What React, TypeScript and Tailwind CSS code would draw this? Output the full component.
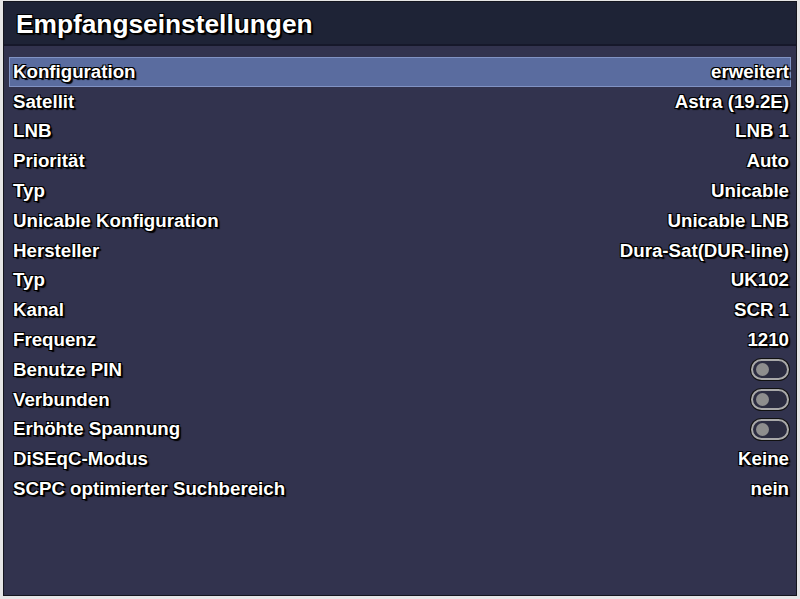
import React from 'react'

type Row = { label: string; value?: string; toggle?: boolean }

const rows: Row[] = [
  { label: 'Konfiguration', value: 'erweitert' },
  { label: 'Satellit', value: 'Astra (19.2E)' },
  { label: 'LNB', value: 'LNB 1' },
  { label: 'Priorität', value: 'Auto' },
  { label: 'Typ', value: 'Unicable' },
  { label: 'Unicable Konfiguration', value: 'Unicable LNB' },
  { label: 'Hersteller', value: 'Dura-Sat(DUR-line)' },
  { label: 'Typ', value: 'UK102' },
  { label: 'Kanal', value: 'SCR 1' },
  { label: 'Frequenz', value: '1210' },
  { label: 'Benutze PIN', toggle: true },
  { label: 'Verbunden', toggle: true },
  { label: 'Erhöhte Spannung', toggle: true },
  { label: 'DiSEqC-Modus', value: 'Keine' },
  { label: 'SCPC optimierter Suchbereich', value: 'nein' },
]

const shadow = '[text-shadow:1px_1px_0_#000,-1px_-1px_0_#000,1px_-1px_0_#000,-1px_1px_0_#000,2px_2px_1px_#000]'

function Toggle() {
  return (
    <div className="flex h-[21px] w-[38px] items-center rounded-full border-2 border-[#a9a9a9] bg-[#2b2c40] pl-[3px] shadow-[0_0_0_1px_#111]">
      <div className="h-[13px] w-[13px] rounded-full bg-[#8e8e8e]" />
    </div>
  )
}

export default function App() {
  return (
    <div className="h-[599px] w-[800px] bg-[#e6e6e6] pl-[3px] pt-[1px] font-['Liberation_Sans',Arial,sans-serif]">
      <div className="flex h-[595px] w-[794px] flex-col border border-[#15161f] bg-[#32334e]">
        <div className="flex h-[44px] items-center border-b-2 border-[#16182a] bg-[#1e2336] pl-[12px] pt-[3px]">
          <h1 className={`text-[26.3px] font-bold text-white ${shadow}`}>Empfangseinstellungen</h1>
        </div>
        <div className="flex flex-col px-[5px] pt-[11px]">
          {rows.map((r, i) => (
            <div
              key={i}
              className={`flex h-[29.8px] items-center justify-between pl-[3px] pr-[1px] text-[18.7px] font-bold text-white ${
                i === 0 ? 'border border-[#8193c4] bg-[#5a6c9f]' : 'border border-transparent'
              }`}
            >
              <span className={shadow}>{r.label}</span>
              {r.toggle ? <Toggle /> : <span className={shadow}>{r.value}</span>}
            </div>
          ))}
        </div>
      </div>
    </div>
  )
}
